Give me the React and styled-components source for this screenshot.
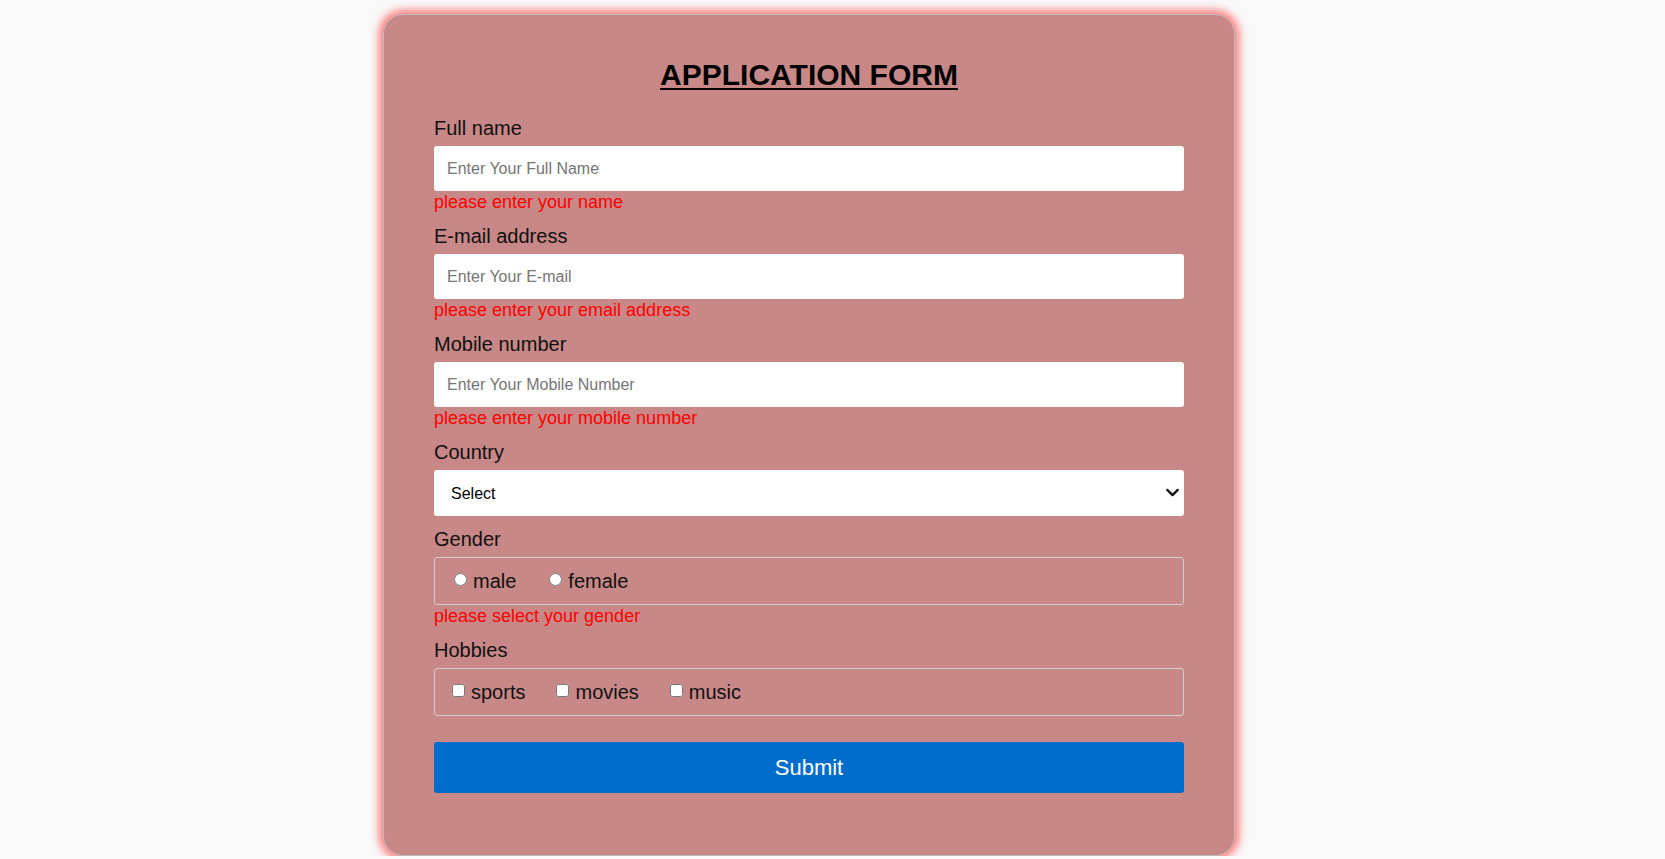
import React from 'react'
import styled, { createGlobalStyle } from 'styled-components'
import { ChevronDown } from 'lucide-react'

const GlobalStyle = createGlobalStyle`
  body{
    margin: 0;
    background: #f9f9f9;
    font-family: "Liberation Sans", Arial, sans-serif;
  }
`

const fields = [
  { label: 'Full name', placeholder: 'Enter Your Full Name', error: 'please enter your name' },
  { label: 'E-mail address', placeholder: 'Enter Your E-mail', error: 'please enter your email address' },
  { label: 'Mobile number', placeholder: 'Enter Your Mobile Number', error: 'please enter your mobile number' },
]

function App() {
  return (
    <Page>
      <GlobalStyle />
      <Card>
        <Title>APPLICATION FORM</Title>
        {fields.map(f => (
          <Group key={f.label}>
            <Label>{f.label}</Label>
            <Input type="text" placeholder={f.placeholder} />
            <Error>{f.error}</Error>
          </Group>
        ))}
        <Group>
          <Label>Country</Label>
          <SelectWrap>
            <Select defaultValue="">
              <option value="">Select</option>
              <option>India</option>
              <option>USA</option>
              <option>UK</option>
            </Select>
            <Chevron size={21} strokeWidth={2.6} />
          </SelectWrap>
        </Group>
        <Group>
          <Label>Gender</Label>
          <OptionBox>
            <Option>
              <Radio type="radio" name="gender" />male
            </Option>
            <Option>
              <Radio type="radio" name="gender" />female
            </Option>
          </OptionBox>
          <Error>please select your gender</Error>
        </Group>
        <Group>
          <Label>Hobbies</Label>
          <OptionBox>
            <Option><Check type="checkbox" />sports</Option>
            <Option><Check type="checkbox" />movies</Option>
            <Option><Check type="checkbox" />music</Option>
          </OptionBox>
        </Group>
        <Submit type="button">Submit</Submit>
      </Card>
    </Page>
  )
}

export default App

const Page = styled.div`
  padding-top: 14px;
`
const Card = styled.form`
  width: 750px;
  margin-left: 383px;
  padding: 42px 50px 62px;
  background: #c78887;
  border: 1px solid #bdbdbd;
  border-radius: 20px;
  box-shadow: 0 0 9px 4px rgba(255, 70, 70, 0.7);
`
const Title = styled.h1`
  margin: 0 0 25px;
  font-size: 30px;
  line-height: 35px;
  font-weight: 700;
  text-align: center;
  text-decoration: underline;
  text-decoration-thickness: 2px;
  text-underline-offset: 3px;
  color: #000;
`
const Group = styled.div`
  margin-bottom: 12px;
`
const Label = styled.label`
  display: block;
  font-size: 20px;
  line-height: 23px;
  color: #111;
  margin-bottom: 6px;
`
const Input = styled.input`
  display: block;
  box-sizing: border-box;
  width: 100%;
  height: 45px;
  padding: 0 13px;
  border: none;
  border-radius: 3px;
  background: #fff;
  font-family: "Liberation Sans", Arial, sans-serif;
  font-size: 16px;
  outline: none;
  &::placeholder{
    color: #757575;
  }
`
const Error = styled.div`
  font-size: 18px;
  line-height: 22px;
  color: #ff0000;
`
const SelectWrap = styled.div`
  position: relative;
`
const Select = styled.select`
  display: block;
  box-sizing: border-box;
  width: 100%;
  height: 46px;
  padding: 0 17px;
  appearance: none;
  border: none;
  border-radius: 3px;
  background: #fff;
  font-family: "Liberation Sans", Arial, sans-serif;
  font-size: 16px;
  color: #000;
  outline: none;
`
const Chevron = styled(ChevronDown)`
  position: absolute;
  right: 1px;
  top: 12px;
  color: #111;
  pointer-events: none;
`
const OptionBox = styled.div`
  box-sizing: border-box;
  height: 48px;
  display: flex;
  align-items: center;
  gap: 31px;
  padding: 0 17px;
  border: 1px solid #cfcfcf;
  border-radius: 3px;
`
const Option = styled.label`
  display: flex;
  align-items: center;
  font-size: 20px;
  line-height: 23px;
  color: #111;
`
const Radio = styled.input`
  width: 13px;
  height: 13px;
  margin: 0 6px 3px 2px;
`
const Check = styled.input`
  width: 13px;
  height: 13px;
  margin: 0 6px 3px 0;
`
const Submit = styled.button`
  display: block;
  width: 100%;
  height: 51px;
  margin-top: 26px;
  border: none;
  border-radius: 3px;
  background: #006dcc;
  color: #fff;
  font-family: "Liberation Sans", Arial, sans-serif;
  font-size: 22px;
  cursor: pointer;
`
